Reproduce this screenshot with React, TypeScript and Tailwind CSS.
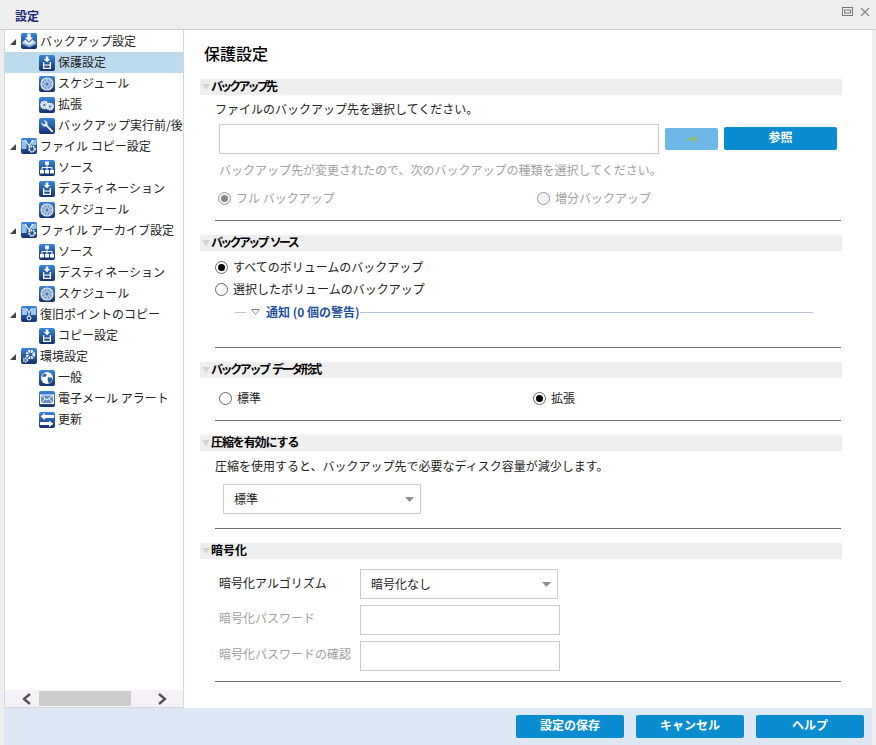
import React from "react";

const FONT = "font-['Noto_Sans_CJK_JP','Noto_Sans',sans-serif]";

// tile used behind all the tree icons
const Tile = ({ size = 16, children }: { size?: number; children: React.ReactNode }) => (
  <svg width={size} height={size} viewBox="0 0 16 16" className="shrink-0">
    <defs>
      <linearGradient id="tile" x1="0" y1="0" x2="0" y2="1">
        <stop offset="0" stopColor="#3a86dc" />
        <stop offset="1" stopColor="#14306f" />
      </linearGradient>
    </defs>
    <rect x="0" y="0" width="16" height="16" rx="2" fill="url(#tile)" />
    {children}
  </svg>
);

const DestIcon = () => (
  <Tile>
    <path d="M6.700 1.500h2.600v2.500h2L8 7.300 4.700 4h2z" fill="#fff" />
    <path d="M4 7v7h8V7h-1.300v5.700H5.300V7z" fill="#fff" />
    <rect x="5" y="9.500" width="6" height="1.100" fill="#fff" />
  </Tile>
);

const ClockIcon = () => (
  <Tile>
    <circle cx="8" cy="8" r="6" fill="#7ea4d2" stroke="#e8f0f8" strokeWidth="1.100" />
    <path d="M8 3v10M3 8h10M4.500 4.500l7 7M11.500 4.500l-7 7" stroke="#eef4fa" strokeWidth="0.700" />
    <circle cx="8" cy="8" r="1.500" fill="#4a78b2" />
  </Tile>
);

const GearsIcon = () => (
  <Tile>
    <circle cx="5.500" cy="8" r="3.600" fill="#c8d8ea" stroke="#fff" strokeWidth="1.500" strokeDasharray="1.500 0.700" />
    <circle cx="11" cy="9.500" r="3.200" fill="#c8d8ea" stroke="#fff" strokeWidth="1.500" strokeDasharray="1.500 0.700" />
    <circle cx="5.500" cy="8" r="1.100" fill="#3d6ca8" />
    <circle cx="11" cy="9.500" r="1" fill="#3d6ca8" />
  </Tile>
);

const WrenchIcon = () => (
  <Tile>
    <path
      d="M13 14.500l1.300-1.300-6-6.200c.6-1.800 0-4-2.800-4.800l-.7.2 1.800 2-.3 1.700-1.700.4-2-1.900-.2.800c.6 2.600 2.800 3.500 4.700 2.900z"
      fill="#fff"
    />
  </Tile>
);

const SourceIcon = () => (
  <Tile>
    <rect x="6" y="1.500" width="4" height="3.500" fill="#fff" />
    <path d="M8 5v2.500M3 10V7.500h10V10M8 7.500V10" stroke="#fff" strokeWidth="1" fill="none" />
    <rect x="1" y="10" width="4" height="3.500" fill="#fff" />
    <rect x="6" y="10" width="4" height="3.500" fill="#fff" />
    <rect x="11" y="10" width="4" height="3.500" fill="#fff" />
  </Tile>
);

const GlobeIcon = () => (
  <Tile>
    <circle cx="8" cy="8" r="6" fill="#f2f6fb" />
    <path d="M5 3.500c2 0 3 1 2.500 2.200S4.500 7 3 6.500zM9 7.500c2-.8 4 .2 4.500 1.500-.5 2-2 4-3.500 4.500-.5-1.500-2-4-1-6z" fill="#2c5f9e" />
  </Tile>
);

const MailIcon = () => (
  <Tile>
    <rect x="1.500" y="4" width="13" height="8.500" fill="#5f8fc8" stroke="#fff" strokeWidth="1.100" />
    <path d="M2 4.500l6 4.500 6-4.500M2 12l4.200-4.200M14 12L9.800 7.800" stroke="#fff" strokeWidth="1" fill="none" />
  </Tile>
);

const UpdateIcon = () => (
  <Tile>
    <path d="M15 3h-9V1L1.500 4.500 6 8V6h9z" fill="#fff" />
    <path d="M1 10h9V8.500l4.500 3.200L10 15v-2H1z" fill="#fff" />
  </Tile>
);

const BackupIcon = () => (
  <Tile>
    <path d="M6.300 0.500h3.400v4h2.500L8 8.500 3.800 4.500h2.500z" fill="#fff" />
    <path d="M1 9.500L4.500 6.500 8 9.500l3.500-3 3.500 3-6.500 3.500z" fill="#d6e4f4" />
    <path d="M1 9.500v1.700l7.500 3.300 6.500-3.300V9.500L8.500 13z" fill="#86abd9" />
  </Tile>
);

const CopyGearIcon = () => (
  <Tile>
    <path d="M0.500 2h5v9h-5zM15.500 2h-5v5h5z" fill="#8fc3ee" />
    <path d="M4 2l5 7" stroke="#fff" strokeWidth="1.100" />
    <path d="M12 2L8 8" stroke="#fff" strokeWidth="1.100" />
    <circle cx="11" cy="11" r="2.800" fill="none" stroke="#fff" strokeWidth="2" strokeDasharray="1.500 0.800" />
  </Tile>
);

const RestoreCopyIcon = () => (
  <Tile>
    <path d="M1 2h5v7H1zM10 2h5v7h-5z" fill="#9cc8ee" />
    <path d="M6 3l2 4 2-4M8 7v4" stroke="#fff" strokeWidth="1" fill="none" />
    <circle cx="8" cy="12" r="2" fill="none" stroke="#fff" strokeWidth="1" />
  </Tile>
);

const GearIcon = () => (
  <Tile>
    <circle cx="9.500" cy="6.500" r="3.400" fill="none" stroke="#fff" strokeWidth="2.600" strokeDasharray="1.800 0.900" />
    <circle cx="4.500" cy="12" r="1.800" fill="none" stroke="#e4edf7" strokeWidth="1.800" strokeDasharray="1.200 0.600" />
  </Tile>
);

type TreeNode = { label: string; icon: React.ReactNode; selected?: boolean };
type TreeGroup = { label: string; icon: React.ReactNode; items: TreeNode[] };

const tree: TreeGroup[] = [
  {
    label: "バックアップ設定",
    icon: <BackupIcon />,
    items: [
      { label: "保護設定", icon: <DestIcon />, selected: true },
      { label: "スケジュール", icon: <ClockIcon /> },
      { label: "拡張", icon: <GearsIcon /> },
      { label: "バックアップ実行前/後の設定", icon: <WrenchIcon /> },
    ],
  },
  {
    label: "ファイル コピー設定",
    icon: <CopyGearIcon />,
    items: [
      { label: "ソース", icon: <SourceIcon /> },
      { label: "デスティネーション", icon: <DestIcon /> },
      { label: "スケジュール", icon: <ClockIcon /> },
    ],
  },
  {
    label: "ファイル アーカイブ設定",
    icon: <CopyGearIcon />,
    items: [
      { label: "ソース", icon: <SourceIcon /> },
      { label: "デスティネーション", icon: <DestIcon /> },
      { label: "スケジュール", icon: <ClockIcon /> },
    ],
  },
  {
    label: "復旧ポイントのコピー",
    icon: <RestoreCopyIcon />,
    items: [{ label: "コピー設定", icon: <DestIcon /> }],
  },
  {
    label: "環境設定",
    icon: <GearIcon />,
    items: [
      { label: "一般", icon: <GlobeIcon /> },
      { label: "電子メール アラート", icon: <MailIcon /> },
      { label: "更新", icon: <UpdateIcon /> },
    ],
  },
];

const Tree = () => (
  <div className="flex-1 overflow-hidden pt-[1px]">
    {tree.map((group) => (
      <div key={group.label}>
        <div className="flex h-[21px] items-center whitespace-nowrap">
          <svg width="6" height="6" viewBox="0 0 6 6" className="ml-[5px] mr-[5px] shrink-0">
            <path d="M6 0v6H0z" fill="#444" />
          </svg>
          <span className="mb-[2px] mr-[3px] flex">{group.icon}</span>
          <span className="pb-[2px]">{group.label}</span>
        </div>
        {group.items.map((item) => (
          <div
            key={item.label}
            className={`flex h-[21px] items-center whitespace-nowrap pl-[34px] ${item.selected ? "bg-[#bcdcee]" : ""}`}
          >
            {item.icon}
            <span className="ml-[3px] pb-[2px]">{item.label}</span>
          </div>
        ))}
      </div>
    ))}
  </div>
);

const Scrollbar = () => (
  <div className="flex h-[17px] items-center bg-[#f6f1f6]">
    <svg width="12" height="12" viewBox="0 0 12 12" className="ml-[16px] shrink-0">
      <path d="M9 1L3 6l6 5" fill="none" stroke="#555" strokeWidth="2.400" />
    </svg>
    <div className="ml-[6px] h-[15px] w-[92px] bg-[#cccccc]" />
    <svg width="12" height="12" viewBox="0 0 12 12" className="ml-[25px] shrink-0">
      <path d="M3 1l6 5-6 5" fill="none" stroke="#555" strokeWidth="2.400" />
    </svg>
  </div>
);

const SectionHeader = ({ title, tracking }: { title: string; tracking?: string }) => (
  <div className="flex h-4 items-center bg-[#eeeeee]">
    <svg width="8" height="6" viewBox="0 0 8 6" className="ml-[2px] shrink-0">
      <path d="M0 0h8L4 6z" fill="#d4d4d4" />
    </svg>
    <span className={`ml-[1px] whitespace-pre pb-[2px] font-bold leading-none text-black ${tracking ?? ""}`}>{title}</span>
  </div>
);

const Radio = ({
  label,
  checked,
  disabled,
  className,
}: {
  label: string;
  checked?: boolean;
  disabled?: boolean;
  className?: string;
}) => (
  <div className={`flex h-[18px] items-center ${disabled ? "text-[#a0a0a0]" : ""} ${className ?? ""}`}>
    <span
      className={`flex h-[13px] w-[13px] shrink-0 items-center justify-center rounded-full border ${
        disabled ? "border-[#999] bg-[#f6f1f6]" : "border-[#666] bg-white"
      }`}
    >
      {checked && <span className={`h-[7px] w-[7px] rounded-full ${disabled ? "bg-[#888]" : "bg-black"}`} />}
    </span>
    <span className="ml-[5px]">{label}</span>
  </div>
);

const Select = ({ value, className }: { value: string; className: string }) => (
  <div className={`flex h-[30px] items-center border border-[#cccccc] bg-white ${className}`}>
    <span className="ml-[10px] flex-1">{value}</span>
    <svg width="9" height="5" viewBox="0 0 9 5" className="mr-[6px] shrink-0">
      <path d="M0 0h9L4.500 5z" fill="#8a8f99" />
    </svg>
  </div>
);

const Rule = ({ className }: { className: string }) => (
  <div className={`ml-[15px] mr-[1px] h-px bg-[#6f6f6f] ${className}`} />
);

const BlueButton = ({ label, className }: { label: string; className: string }) => (
  <button className={`rounded-[2px] bg-[#0a8dd0] pb-[3px] text-center font-bold leading-none text-white ${className}`}>
    {label}
  </button>
);

const Field = ({ className }: { className?: string }) => (
  <div className={`h-[30px] border border-[#cccccc] bg-white ${className ?? ""}`} />
);

export default function App() {
  return (
    <div className={`flex h-[745px] w-[876px] flex-col overflow-hidden bg-[#eeeeee] text-[12px] leading-[18px] text-[#222] ${FONT}`}>
      {/* title bar */}
      <div className="flex h-[30px] shrink-0 items-center border-b border-[#cccccc] pl-[15px] pr-[6px] pt-[2px]">
        <span className="flex-1 font-bold text-[#1a2a78]">設定</span>
        <svg width="11" height="9" viewBox="0 0 11 9" className="mb-[8px] mr-[7px]">
          <rect x="0.500" y="0.500" width="10" height="8" fill="none" stroke="#777" />
          <rect x="2.500" y="3" width="6" height="3" fill="none" stroke="#777" />
        </svg>
        <svg width="10" height="10" viewBox="0 0 10 10" className="mb-[8px]">
          <path d="M1 1l8 8M9 1l-8 8" stroke="#888" strokeWidth="1.300" />
        </svg>
      </div>

      <div className="flex min-h-0 flex-1 pl-[4px] pr-[4px]">
        {/* left tree */}
        <div className="flex w-[180px] shrink-0 flex-col border border-t-0 border-[#cfd8e4] bg-white">
          <Tree />
          <Scrollbar />
        </div>

        {/* settings */}
        <div className="flex-1 bg-white pl-[16px] pr-[30px]">
          <h1 className="ml-[4px] mt-[14px] text-[16px] font-medium leading-[18px] text-black">保護設定</h1>

          <div className="mt-[17px]">
            <SectionHeader title="バックアップ先" tracking="tracking-[-2.85px]" />
            <p className="ml-[15px] mt-[5px]">ファイルのバックアップ先を選択してください。</p>
            <div className="ml-[19px] mt-[6px] flex items-start">
              <Field className="w-[440px]" />
              <div className="ml-[6px] mt-[4px] flex h-[22px] w-[53px] items-center justify-center rounded-[2px] bg-[#6db8e6]">
                <svg width="12" height="12" viewBox="0 0 12 12">
                  <path d="M0 5h6.500V1.500L12 6l-5.500 4.500V7H0z" fill="#90bd80" />
                </svg>
              </div>
              <BlueButton label="参照" className="ml-[6px] mt-[3px] h-[23px] w-[113px]" />
            </div>
            <p className="ml-[19px] mt-[7px] text-[#a0a0a0]">バックアップ先が変更されたので、次のバックアップの種類を選択してください。</p>
            <div className="ml-[18px] mt-[10px] flex">
              <Radio label="フル バックアップ" checked disabled className="w-[319px]" />
              <Radio label="増分バックアップ" disabled />
            </div>
            <Rule className="mt-[13px]" />
          </div>

          <div className="mt-[14px]">
            <SectionHeader title="バックアップ ソース" tracking="tracking-[-2.7px] [word-spacing:3px]" />
            <Radio label="すべてのボリュームのバックアップ" checked className="ml-[15px] mt-[7px]" />
            <Radio label="選択したボリュームのバックアップ" className="ml-[15px] mt-[4px]" />
            <div className="ml-[35px] mr-[29px] mt-[5px] flex h-[18px] items-center">
              <div className="h-px w-[11px] bg-[#b7c4d8]" />
              <svg width="9" height="6" viewBox="0 0 9 6" className="ml-[5px]">
                <path d="M0.500 0.500h8L4.500 5.500z" fill="none" stroke="#888" />
              </svg>
              <span className="ml-[6px] font-bold text-[#1f4e9e]">通知 (0 個の警告)</span>
              <div className="h-px flex-1 bg-[#b7c4d8]" />
            </div>
            <Rule className="mt-[26px]" />
          </div>

          <div className="mt-[14px]">
            <SectionHeader title="バックアップ データ形式" tracking="tracking-[-2.4px] [word-spacing:3px]" />
            <div className="ml-[19px] mt-[11px] flex">
              <Radio label="標準" className="w-[314px]" />
              <Radio label="拡張" checked />
            </div>
            <Rule className="mt-[13px]" />
          </div>

          <div className="mt-[14px]">
            <SectionHeader title="圧縮を有効にする" tracking="tracking-[-1.1px]" />
            <p className="ml-[15px] mt-[6px]">圧縮を使用すると、バックアップ先で必要なディスク容量が減少します。</p>
            <Select value="標準" className="ml-[23px] mt-[9px] w-[198px]" />
            <Rule className="mt-[14px]" />
          </div>

          <div className="mt-[14px]">
            <SectionHeader title="暗号化" />
            <div className="ml-[19px] mt-[10px] flex items-center">
              <span className="w-[141px] pb-[2px]">暗号化アルゴリズム</span>
              <Select value="暗号化なし" className="w-[198px]" />
            </div>
            <div className="ml-[19px] mt-[6px] flex items-center text-[#a0a0a0]">
              <span className="w-[141px] pb-[4px]">暗号化パスワード</span>
              <Field className="w-[200px]" />
            </div>
            <div className="ml-[19px] mt-[6px] flex items-center text-[#a0a0a0]">
              <span className="w-[141px] pb-[4px]">暗号化パスワードの確認</span>
              <Field className="w-[200px]" />
            </div>
            <Rule className="mt-[10px]" />
          </div>
        </div>
      </div>

      {/* footer */}
      <div className="mx-[4px] flex h-[37px] shrink-0 items-center justify-end gap-[12px] bg-[#dde8f4] pr-[8px]">
        <BlueButton label="設定の保存" className="h-[23px] w-[108px]" />
        <BlueButton label="キャンセル" className="h-[23px] w-[108px]" />
        <BlueButton label="ヘルプ" className="h-[23px] w-[108px]" />
      </div>
    </div>
  );
}
